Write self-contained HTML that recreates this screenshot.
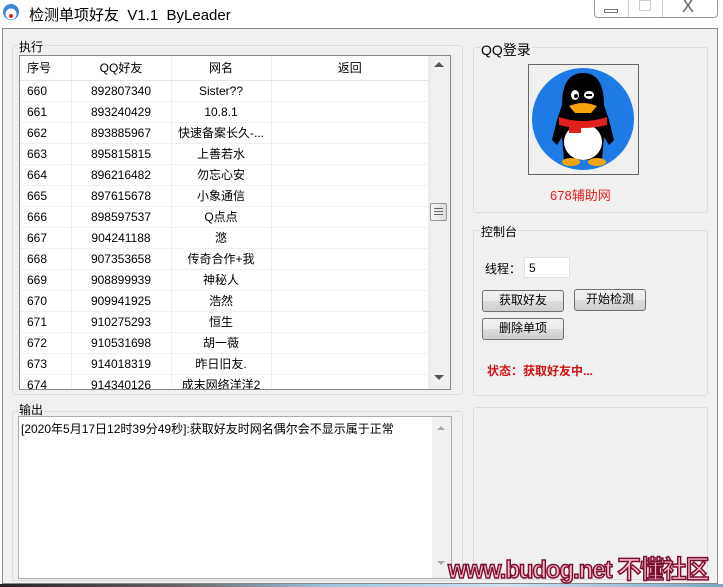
<!DOCTYPE html>
<html><head><meta charset="utf-8"><style>
*{margin:0;padding:0;box-sizing:border-box}
body{width:723px;height:587px;overflow:hidden;background:#fff;font-family:"Liberation Sans","Noto Sans CJK SC",sans-serif;font-size:12px;color:#000;position:relative}
.a{position:absolute}
.grp{position:absolute;border:1px solid #dcdcdc;border-radius:3px}
.lbl{position:absolute;background:#f0f0f0;font-size:12px;padding:0 1px}
.btn{position:absolute;border:1px solid #707070;border-radius:3px;background:linear-gradient(#f2f2f2,#ebebeb 50%,#dddddd 51%,#cfcfcf);text-align:center;font-size:12px;line-height:19px}
table{border-collapse:collapse;font-size:12px;table-layout:fixed}
td{height:21px;border-bottom:1px solid #f0f0f0;border-right:1px solid #f0f0f0;padding:0}
</style></head><body>
<div class="a" style="left:0;top:0;width:723px;height:28px;background:#fff"></div>
<svg class="a" style="left:2px;top:3px" width="18" height="18"><circle cx="9" cy="9" r="8" fill="#3a86d8"/><circle cx="9" cy="11" r="5.5" fill="#fff"/><circle cx="9" cy="13" r="2" fill="#d22"/></svg>
<div class="a" style="left:29px;top:4px;font-size:15px">检测单项好友&nbsp;&nbsp;V1.1&nbsp;&nbsp;ByLeader</div>
<div class="a" style="left:594px;top:-2px;width:124px;height:20px;border:1px solid #9a9a9a;border-radius:0 0 4px 4px;background:#fff"></div>
<div class="a" style="left:628px;top:0;width:1px;height:17px;background:#ccc"></div>
<div class="a" style="left:662px;top:0;width:1px;height:17px;background:#ccc"></div>
<div class="a" style="left:604px;top:9px;width:14px;height:4px;border:1px solid #777"></div>
<div class="a" style="left:639px;top:0px;width:12px;height:11px;border:1px solid #ccc"></div>
<div class="a" style="left:682px;top:-4px;font-size:18px;color:#666">X</div>
<div class="a" style="left:2px;top:28px;width:716px;height:556px;background:#f0f0f0;border:1px solid #8a8a8a"></div>
<div class="a" style="left:0;top:584px;width:723px;height:3px;background:linear-gradient(90deg,#222,#666 25%,#9cc3e0 45%,#cfe3f3 70%,#7aa4c8)"></div>
<div class="grp" style="left:12px;top:45px;width:451px;height:350px"></div>
<div class="lbl" style="left:18px;top:38px">执行</div>
<div class="a" style="left:19px;top:55px;width:432px;height:335px;background:#fff;border:1px solid #828790;overflow:hidden">
<table style="position:absolute;left:0;top:0;width:409px">
<colgroup><col style="width:51px"><col style="width:100px"><col style="width:100px"><col></colgroup>
<tr><td style="padding-left:7px;height:24px;border-bottom:1px solid #e5e5e5">序号</td><td style="text-align:center;border-bottom:1px solid #e5e5e5">QQ好友</td><td style="text-align:center;border-bottom:1px solid #e5e5e5">网名</td><td style="text-align:center;border-bottom:1px solid #e5e5e5">返回</td></tr>
<tr><td style="padding-left:7px">660</td><td align="center">892807340</td><td align="center">Sister??</td><td></td></tr>
<tr><td style="padding-left:7px">661</td><td align="center">893240429</td><td align="center">10.8.1</td><td></td></tr>
<tr><td style="padding-left:7px">662</td><td align="center">893885967</td><td align="center">快速备案长久-...</td><td></td></tr>
<tr><td style="padding-left:7px">663</td><td align="center">895815815</td><td align="center">上善若水</td><td></td></tr>
<tr><td style="padding-left:7px">664</td><td align="center">896216482</td><td align="center">勿忘心安</td><td></td></tr>
<tr><td style="padding-left:7px">665</td><td align="center">897615678</td><td align="center">小象通信</td><td></td></tr>
<tr><td style="padding-left:7px">666</td><td align="center">898597537</td><td align="center">Q点点</td><td></td></tr>
<tr><td style="padding-left:7px">667</td><td align="center">904241188</td><td align="center">滺</td><td></td></tr>
<tr><td style="padding-left:7px">668</td><td align="center">907353658</td><td align="center">传奇合作+我</td><td></td></tr>
<tr><td style="padding-left:7px">669</td><td align="center">908899939</td><td align="center">神秘人</td><td></td></tr>
<tr><td style="padding-left:7px">670</td><td align="center">909941925</td><td align="center">浩然</td><td></td></tr>
<tr><td style="padding-left:7px">671</td><td align="center">910275293</td><td align="center">恒生</td><td></td></tr>
<tr><td style="padding-left:7px">672</td><td align="center">910531698</td><td align="center">胡一薇</td><td></td></tr>
<tr><td style="padding-left:7px">673</td><td align="center">914018319</td><td align="center">昨日旧友.</td><td></td></tr>
<tr><td style="padding-left:7px">674</td><td align="center">914340126</td><td align="center">成末网络洋洋2</td><td></td></tr>
</table>
<div class="a" style="left:409px;top:0;width:21px;height:333px;background:#f0f0f0;border-left:1px solid #e8e8e8"></div>
<div class="a" style="left:414px;top:6px;width:0;height:0;border-left:5px solid transparent;border-right:5px solid transparent;border-bottom:5px solid #555"></div>
<div class="a" style="left:414px;top:319px;width:0;height:0;border-left:5px solid transparent;border-right:5px solid transparent;border-top:5px solid #555"></div>
<div class="a" style="left:410px;top:147px;width:17px;height:18px;border:1px solid #999;border-radius:2px;background:linear-gradient(90deg,#f4f4f4,#ddd)"></div>
<div class="a" style="left:414px;top:152px;width:9px;height:7px;border-top:1px solid #666;border-bottom:1px solid #666"></div>
<div class="a" style="left:414px;top:155px;width:9px;height:1px;background:#666"></div>
</div>
<div class="grp" style="left:12px;top:411px;width:451px;height:170px"></div>
<div class="lbl" style="left:18px;top:401px">输出</div>
<div class="a" style="left:18px;top:416px;width:434px;height:163px;background:#fff;border:1px solid #abadb3">
<div class="a" style="left:2px;top:3px">[2020年5月17日12时39分49秒]:获取好友时网名偶尔会不显示属于正常</div>
<div class="a" style="left:413px;top:0;width:19px;height:161px;background:#f0f0f0"></div>
<div class="a" style="left:418px;top:9px;width:0;height:0;border-left:4px solid transparent;border-right:4px solid transparent;border-bottom:4px solid #aaa"></div>
<div class="a" style="left:418px;top:144px;width:0;height:0;border-left:4px solid transparent;border-right:4px solid transparent;border-top:4px solid #aaa"></div>
</div>
<div class="grp" style="left:473px;top:47px;width:235px;height:166px"></div>
<div class="lbl" style="left:480px;top:40px;font-size:14px">QQ登录</div>
<div class="a" style="left:528px;top:64px;width:111px;height:111px;border:1px solid #666;background:#f0f0f0"></div>
<svg class="a" style="left:529px;top:65px" width="109" height="109">
<circle cx="54" cy="54" r="51" fill="#1e7be6"/>
<path d="M33 40 Q33 8 54 8 Q75 8 75 40 L80 55 L85 75 L80 80 L75 72 L73 95 L35 95 L33 72 L28 80 L23 75 L28 55Z" fill="#000"/>
<ellipse cx="54" cy="77" rx="19" ry="18" fill="#fff"/>
<ellipse cx="46" cy="30" rx="4" ry="5" fill="#fff"/><circle cx="47" cy="31" r="2" fill="#000"/>
<ellipse cx="60" cy="30" rx="5" ry="4" fill="#fff"/><rect x="57" y="29" width="6" height="2" fill="#000"/>
<path d="M40 41 Q54 35 68 41 L62 48 L46 48Z" fill="#f4a30a"/>
<path d="M30 52 Q54 60 78 52 L78 60 Q54 66 30 60Z" fill="#e0201a"/>
<rect x="40" y="60" width="12" height="8" fill="#e0201a"/>
<ellipse cx="42" cy="97" rx="9" ry="4" fill="#f4a30a"/><ellipse cx="68" cy="97" rx="9" ry="4" fill="#f4a30a"/>
</svg>
<div class="a" style="left:550px;top:185px;color:#e01e1e;font-size:13px">678辅助网</div>
<div class="grp" style="left:473px;top:230px;width:235px;height:166px"></div>
<div class="lbl" style="left:480px;top:223px">控制台</div>
<div class="a" style="left:485px;top:260px">线程：</div>
<div class="a" style="left:524px;top:257px;width:46px;height:21px;background:#fff;border:1px solid #e0e0e0;padding:3px 4px">5</div>
<div class="btn" style="left:482px;top:290px;width:82px;height:22px">获取好友</div>
<div class="btn" style="left:574px;top:289px;width:72px;height:22px">开始检测</div>
<div class="btn" style="left:482px;top:318px;width:82px;height:22px">删除单项</div>
<div class="a" style="left:487px;top:362px;color:#d01010;font-weight:bold">状态：获取好友中...</div>
<div class="grp" style="left:473px;top:407px;width:235px;height:173px"></div>
<div class="a" style="left:448px;top:550px;font-size:25px;font-weight:bold;color:#f6b6c8;letter-spacing:-1px;-webkit-text-stroke:1.5px #7a1030;font-family:'Liberation Sans','Noto Sans CJK SC',sans-serif;transform:scaleX(0.95);transform-origin:left;white-space:nowrap">www.budog.net 不懂社区</div>
</body></html>
